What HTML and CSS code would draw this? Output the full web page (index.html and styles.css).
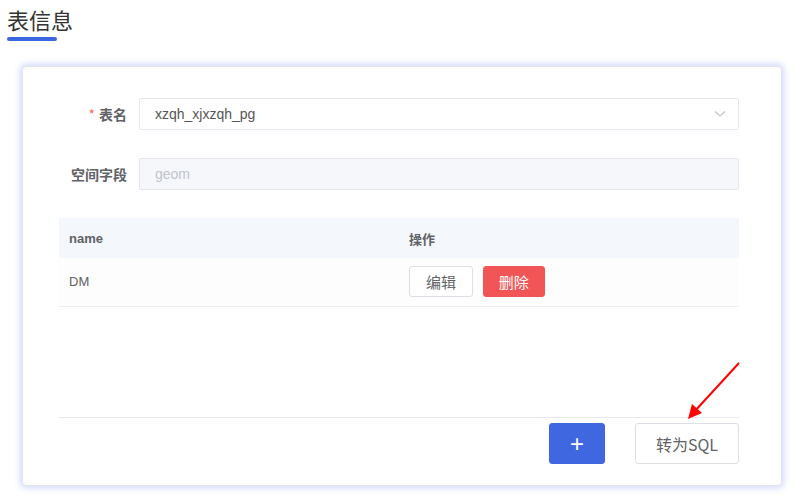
FILE: index.html
```html
<!DOCTYPE html>
<html lang="zh-CN">
<head>
  <meta charset="UTF-8">
  <title>表信息</title>
  <link rel="stylesheet" href="styles.css">
</head>
<body>
  <div class="page-title">
    <h2>表信息</h2>
  </div>

  <div class="card">
    <div class="form-item">
      <label class="form-label"><span class="required">*</span>表名</label>
      <div class="select">
        <span class="select-value">xzqh_xjxzqh_pg</span>
        <svg class="select-arrow" width="12" height="8" viewBox="0 0 12 8">
          <path d="M1 1.5 L6 6 L11 1.5" fill="none" stroke="#c0c4cc" stroke-width="1.2"/>
        </svg>
      </div>
    </div>
    <div class="form-item">
      <label class="form-label">空间字段</label>
      <div class="input disabled">geom</div>
    </div>

    <table class="fields">
      <thead>
        <tr>
          <th>name</th>
          <th>操作</th>
        </tr>
      </thead>
      <tbody>
        <tr>
          <td>DM</td>
          <td>
            <button class="btn btn-default">编辑</button>
            <button class="btn btn-danger">删除</button>
          </td>
        </tr>
      </tbody>
    </table>

    <div class="footer">
      <button class="btn btn-primary btn-large">+</button>
      <button class="btn btn-default btn-large btn-sql">转为SQL</button>
    </div>

    <svg class="pointer" width="70" height="70" viewBox="0 0 70 70">
      <line x1="65" y1="3" x2="20" y2="52" stroke="#f00" stroke-width="2"/>
      <polygon points="14,59 18,44 28,53" fill="#f00"/>
    </svg>
  </div>
</body>
</html>
```

FILE: styles.css
```css
* {
  box-sizing: border-box;
  margin: 0;
  padding: 0;
}

body {
  width: 803px;
  height: 499px;
  background: #fff;
  font-family: "Liberation Sans", "Noto Sans CJK SC", sans-serif;
  color: #606266;
  overflow: hidden;
}

.page-title {
  padding: 4px 0 0 7px;
}

.page-title h2 {
  display: inline-block;
  font-family: "Noto Sans CJK SC", sans-serif;
  font-size: 22px;
  font-weight: normal;
  line-height: 30px;
  color: #333;
}

.page-title h2::after {
  content: "";
  display: block;
  width: 50px;
  height: 4px;
  margin-top: 3px;
  border-radius: 2px;
  background: #3c66e0;
}

.card {
  position: relative;
  width: 760px;
  height: 420px;
  margin: 25px 0 0 22px;
  padding: 31px 42px 21px 36px;
  background: #fff;
  border: 1px solid #e4e4e8;
  border-radius: 4px;
  box-shadow: 0 0 6px 2px rgba(120, 145, 255, 0.35);
  display: flex;
  flex-direction: column;
}

.form-item {
  display: flex;
  align-items: center;
  height: 32px;
  margin-bottom: 28px;
}

.form-label {
  width: 80px;
  padding-right: 12px;
  text-align: right;
  font-family: "Noto Sans CJK SC", sans-serif;
  font-size: 14px;
  font-weight: bold;
  color: #606266;
}

.required {
  color: #f56c6c;
  margin-right: 4px;
  font-weight: normal;
}

.select,
.input {
  flex: 1;
  height: 32px;
  display: flex;
  align-items: center;
  padding: 0 15px;
  border: 1px solid #e4e7ed;
  border-radius: 2px;
  font-size: 14px;
  color: #555;
}

.select-value {
  flex: 1;
}

.select-arrow {
  margin-right: -3px;
}

.input.disabled {
  background: #f5f7fa;
  color: #c0c4cc;
}

.fields {
  width: 680px;
  border-collapse: collapse;
  font-size: 13px;
}

.fields th {
  height: 40px;
  padding: 0 10px;
  text-align: left;
  background: #f4f7fb;
  font-weight: bold;
  color: #606266;
  width: 50%;
}

.fields td {
  height: 48px;
  padding: 0 10px;
  background: #fdfdfd;
  border-bottom: 1px solid #ebeef5;
  color: #606266;
}

.btn {
  height: 31px;
  padding: 0 16px;
  border: 1px solid #dcdfe6;
  border-radius: 3px;
  background: #fff;
  font-family: "Noto Sans CJK SC", sans-serif;
  font-size: 15px;
  color: #606266;
  cursor: pointer;
  vertical-align: middle;
}

.btn + .btn {
  margin-left: 6px;
}

.btn-danger {
  width: 62px;
  padding: 0;
  background: #f25555;
  border-color: #f25555;
  color: #fff;
}

.footer {
  margin-top: auto;
  border-top: 1px solid #e8eaf0;
  padding-top: 5px;
  display: flex;
  justify-content: flex-end;
  gap: 30px;
}

.btn-large {
  height: 41px;
  font-size: 16px;
}

.btn-primary {
  width: 56px;
  background: #3e67e0;
  border-color: #3e67e0;
  color: #fff;
  font-family: "Liberation Sans", sans-serif;
  font-size: 24px;
  font-weight: 300;
}

.footer .btn + .btn {
  margin-left: 0;
}

.btn-sql {
  width: 104px;
  padding: 0;
}

.pointer {
  position: absolute;
  left: 651px;
  top: 293px;
}
```
